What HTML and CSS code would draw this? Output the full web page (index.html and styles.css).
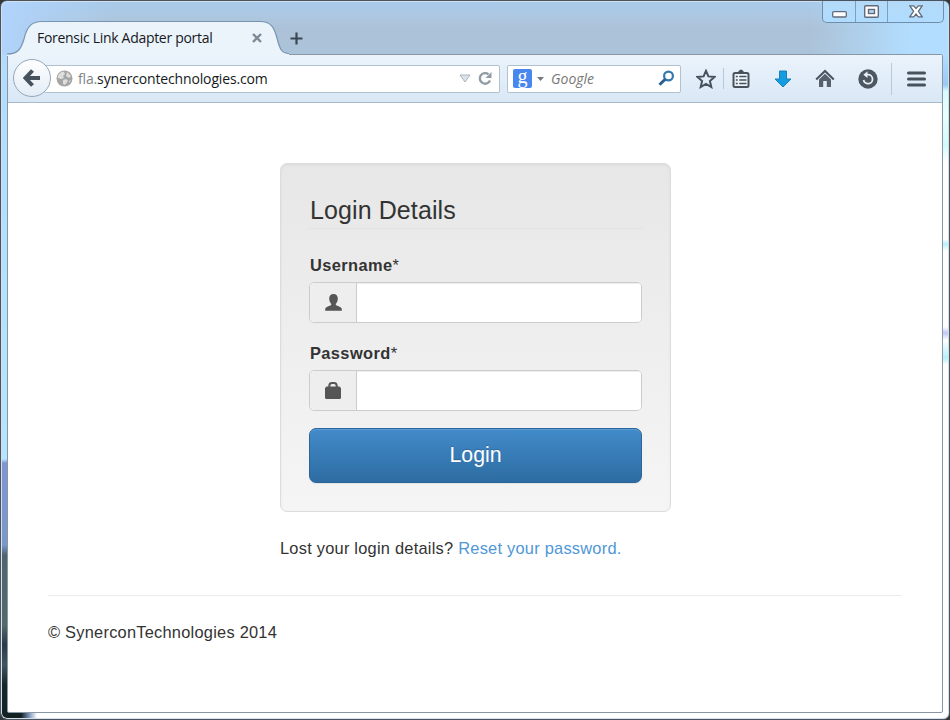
FILE: index.html
```html
<!DOCTYPE html>
<html lang="en">
<head>
<meta charset="utf-8">
<title>Forensic Link Adapter portal</title>
<link rel="stylesheet" href="styles.css">
</head>
<body>
<div class="window">
  <header class="titlebar">
    <div class="tab">
      <svg class="tab-shape" width="282" height="36" viewBox="0 0 282 36"><path d="M0 36V34.500C11 34 14 29 17 19C20 6 25 1.500 35 1.500H253C264 1.500 267 7 270 18C273 30 275 33.500 282 33.500V36Z" fill="#ebf3fb"/><path d="M0 34C11 34 14 29 17 19C20 6 25 1.500 35 1.500H253C264 1.500 267 7 270 18C273 30 275 33.500 282 33.500" fill="none" stroke="#7895b0" stroke-width="1.200"/></svg>
      <span class="tab-title">Forensic Link Adapter portal</span>
      <svg class="tab-close" width="10" height="10" viewBox="0 0 10 10"><path d="M1 1L9 9M9 1L1 9" stroke="#7d8b98" stroke-width="2.400"/></svg>
    </div>
    <svg class="new-tab" width="13" height="13" viewBox="0 0 13 13"><path d="M6.500 .5V12.500M.5 6.500H12.500" stroke="#394752" stroke-width="2.200"/></svg>
    <div class="caption">
      <span class="cap min"><svg width="15" height="7" viewBox="0 0 15 7"><rect x=".7" y=".7" width="13.600" height="5.300" rx="1" fill="#fff" stroke="#626b7a" stroke-width="1.300"/></svg></span>
      <span class="cap max"><svg width="15" height="13" viewBox="0 0 15 13"><rect x=".7" y=".7" width="13.600" height="11.600" rx="1" fill="#fff" stroke="#626b7a" stroke-width="1.400"/><rect x="4.500" y="4.500" width="6" height="4" fill="#b4daf8" stroke="#626b7a" stroke-width="1.400"/></svg></span>
      <span class="cap close"><svg width="14" height="13" viewBox="0 0 14 13"><path d="M.8 .8H4.700L7 3.600L9.300 .8H13.200L9.400 6.300L13.200 11.800H9.300L7 9L4.700 11.800H.8L4.600 6.300Z" fill="#fff" stroke="#626b7a" stroke-width="1.300"/></svg></span>
    </div>
  </header>
  <main class="client">
    <nav class="toolbar">
      <div class="back"><svg width="18" height="18" viewBox="0 0 18 18"><path d="M9.500 1.500L2.500 9L9.500 16.500M3 9H17" fill="none" stroke="#46535e" stroke-width="4"/></svg></div>
      <div class="urlbar">
        <svg class="globe" width="17" height="17" viewBox="0 0 17 17"><circle cx="8.500" cy="8.500" r="8" fill="#a5a5a5"/><path d="M2 6C3 3 6 1 8 2L9 4L7 6L8 8L5 9L2 8ZM11 2L15 6L13 8L10 6ZM7 10L10 9L12 11L9 15L7 14ZM13 11L15 10L13 13Z" fill="#dedede"/></svg>
        <span class="url"><span class="sub">fla.</span>synercontechnologies.com</span>
        <svg class="drop" width="12" height="9" viewBox="0 0 12 9"><path d="M1 1H11L6 8Z" fill="#dce2e8" stroke="#a9b5c0"/></svg>
        <svg class="reload" width="15" height="15" viewBox="0 0 15 15"><path d="M12 9.500A5.300 5.300 0 1 1 10.500 3.300" fill="none" stroke="#8f9ba6" stroke-width="2.400"/><path d="M13.500 1V7H7.500Z" fill="#8f9ba6"/></svg>
      </div>
      <div class="search">
        <span class="engine">g</span>
        <svg width="7" height="4" viewBox="0 0 7 4"><path d="M0 0H7L3.500 4Z" fill="#737a80"/></svg>
        <span class="hint">Google</span>
        <svg class="lens" width="17" height="17" viewBox="0 0 17 17"><circle cx="10.500" cy="6" r="4.400" fill="none" stroke="#3378ae" stroke-width="2.200"/><path d="M7.200 9.200L1.500 14.800" stroke="#285f93" stroke-width="3"/></svg>
      </div>
      <div class="tools">
        <svg width="20" height="20" viewBox="0 0 20 20"><path d="M10 1.800L12.400 7.400L18.500 7.900L13.900 12L15.300 18L10 14.800L4.700 18L6.100 12L1.500 7.900L7.600 7.400Z" fill="none" stroke="#47525d" stroke-width="2"/></svg>
        <i class="rule short"></i>
        <svg width="18" height="20" viewBox="0 0 18 20"><path d="M5 4L8 .8H10L13 4Z" fill="#47525d"/><rect x="1.500" y="4" width="15" height="14" rx="1.500" fill="#eef3f8" stroke="#47525d" stroke-width="2"/><path d="M3.800 7.500H5.800M7.300 7.500H14.500M3.800 11H5.800M7.300 11H14.500M3.800 14.500H5.800M7.300 14.500H14.500" stroke="#47525d" stroke-width="1.500"/></svg>
        <svg width="18" height="18" viewBox="0 0 18 18"><path d="M5.500 1H12.500V9H17L9 17L1 9H5.500Z" fill="#159be0" stroke="#1680b9"/></svg>
        <svg width="20" height="19" viewBox="0 0 20 19"><path d="M1.200 10.500L10 2L18.800 10.500" fill="none" stroke="#47525d" stroke-width="2"/><path d="M4 10.500L10 4.800L16 10.500V18H11.800V12H8.200V18H4Z" fill="#56616b"/></svg>
        <svg width="20" height="20" viewBox="0 0 20 20"><circle cx="10" cy="10" r="9.700" fill="#4c5761"/><path d="M5.600 11A4.500 4.500 0 1 0 10 5.700H8" fill="none" stroke="#e8eef4" stroke-width="1.800"/><path d="M5.300 5.700L9.500 2.300V9Z" fill="#e8eef4"/></svg>
        <i class="rule tall"></i>
        <svg width="19" height="16" viewBox="0 0 19 16"><path d="M1.500 2H17.500M1.500 8H17.500M1.500 14H17.500" stroke="#47525d" stroke-width="3" stroke-linecap="round"/></svg>
      </div>
    </nav>
    <section class="page">
      <form class="card">
        <h1>Login Details</h1>
        <label for="user">Username<span>*</span></label>
        <div class="field">
          <span class="addon"><svg width="17" height="17" viewBox="0 0 17 17"><path d="M8.500 0C11.300 0 12.800 1.800 12.800 4.500C12.800 7 11.800 8.800 10.800 9.800V11C11.800 12 16.500 12.600 16.800 15V16.700H.2V15C.5 12.600 5.200 12 6.200 11V9.800C5.200 8.800 4.200 7 4.200 4.500C4.200 1.800 5.700 0 8.500 0Z" fill="#555"/></svg></span>
          <input id="user" type="text">
        </div>
        <label for="pass">Password<span>*</span></label>
        <div class="field">
          <span class="addon"><svg width="16" height="17" viewBox="0 0 16 17"><path d="M4.300 6V3.500Q4.500 1 7 1H9Q11.500 1 11.700 3.500V6" fill="none" stroke="#555" stroke-width="2"/><path d="M1.500 4.500H14.500L16 6V15.500Q16 17 14.500 17H1.500Q0 17 0 15.500V6Z" fill="#555"/></svg></span>
          <input id="pass" type="password">
        </div>
        <button type="button">Login</button>
      </form>
      <p class="lost">Lost your login details? <a href="#">Reset your password.</a></p>
      <hr>
      <footer>© SynerconTechnologies 2014</footer>
    </section>
  </main>
</div>
</body>
</html>
```
FILE: styles.css
```css
* { box-sizing: border-box; }
body { margin: 0; background: #34383d; font-family: "Liberation Sans", Arial, sans-serif; overflow: hidden; }
svg { display: block; flex: none; }
.window {
  width: 950px; height: 720px; display: grid; grid-template-rows: 53px 1fr;
  padding: 0 6px 6px; border: 1px solid #4b535d; border-radius: 7px;
  box-shadow: inset 0 0 0 1px #d3e0eb;
  background:
    linear-gradient(90deg, #b0d4fc 0, #b0d4fc00 110px) 0 0 / 100% 54px no-repeat,
    linear-gradient(90deg, #b2ddff00 810px, #b2ddff 910px) 0 0 / 100% 54px no-repeat,
    linear-gradient(#a7cbec 0, #adc7e0 16px, #acc1d7 28px, #abc4d9 54px) 0 0 / 100% 54px no-repeat,
    linear-gradient(#b2dcff 0, #b6e5ff 404px, #8194d2 408px, #7899cd 490px, #4d666e 500px, #536a6c 570px, #2b3b49 590px, #40565c 610px, #15262b 630px, #10191e) 0 54px / 7px 100% no-repeat,
    linear-gradient(#b2ddff 0, #9bc9f4 30px, #d9faff 36px, #e8ffff 60px, #d3fafa 90px, #fff 108px, #fff 184px, #b7effb 189px, #fff 196px, #fff 272px, #bcc8f5 278px, #fff 285px, #b5effb 303px, #fff 310px) 100% 54px / 7px 100% no-repeat,
    linear-gradient(90deg, #12201f, #12201f 20px, #7c92b8 28px, #fff 36px) 0 100% / 100% 7px no-repeat;
}
.titlebar { display: flex; align-items: flex-start; }
.tab { position: relative; width: 282px; height: 36px; margin-top: 19px; display: flex; align-items: center; padding: 0 27px 0 30px; z-index: 1; }
.tab-shape { position: absolute; left: 0; top: 0; }
.tab-title, .tab-close { position: relative; }
.tab-title { font: 14px "Open Sans", sans-serif; white-space: nowrap; letter-spacing: -.3px; color: #15191d; flex: 1; top: -1px; }
.new-tab { margin: 31px 0 0 1px; }
.caption { margin: 0 -1px 0 auto; display: flex; height: 22px; width: 122px; border: 1px solid #708ea8; border-top: 0; border-radius: 0 0 5px 5px; background: linear-gradient(#b4daf8, #afdcff); }
.cap { display: flex; align-items: center; justify-content: center; width: 33px; border-right: 1px solid #7e9fb9; }
.cap.max { width: 32px; }
.cap.min { padding-top: 6px; }
.cap.close { flex: 1; border: 0; }
.client { border: 1px solid #8797a5; background: #fff; display: grid; grid-template-rows: 48px 1fr; min-height: 0; border-radius: 2px; }
.toolbar { display: flex; align-items: center; background: linear-gradient(#ebf3fb, #d9e8f6); border-bottom: 1px solid #a7b9ca; padding-left: 5px; }
.back { width: 38px; height: 38px; border: 1px solid #94a8ba; border-radius: 50%; background: linear-gradient(#fff, #e3edf6); display: grid; place-items: center; position: relative; flex: none; margin-top: -1px; }
.urlbar, .search { height: 28px; border: 1px solid #b2c1ce; background: #fff; display: flex; align-items: center; border-radius: 2px; }
.urlbar { width: 456px; margin-left: -7px; padding: 0 6px 0 12px; border-left: 0; }
.url { font: 14px "Open Sans", sans-serif; letter-spacing: -.15px; color: #15191d; margin-left: 5px; white-space: nowrap; flex: 1; }
.sub { color: #7f8488; }
.drop { margin-right: 7px; }
.search { width: 174px; margin-left: 7px; padding: 0 5px; }
.engine { width: 19px; height: 19px; background: #4787ee; border-radius: 2px; color: #fff; font: 20px/14px "Liberation Serif", serif; text-align: center; margin-right: 5px; }
.hint { font: italic 14px "Open Sans", sans-serif; color: #777; margin-left: 7px; flex: 1; }
.tools { display: flex; align-items: center; margin-left: 15px; flex: 1; }
.rule { width: 1px; background: #b8c8d7; }
.rule.short { height: 21px; margin: 0 8px 0 7px; }
.rule.tall { height: 32px; margin: 0 15px 0 13px; }
.tools svg:nth-of-type(3) { margin-left: 24px; }
.tools svg:nth-of-type(4) { margin-left: 23px; }
.tools svg:nth-of-type(5) { margin-left: 23px; }
.page { padding: 60px 40px 0 40px; color: #333; font-size: 16.4px; letter-spacing: .24px; }
.card { width: 391px; height: 349px; margin-left: 232px; border: 1px solid #dcdcdc; border-radius: 7px; background: linear-gradient(#e7e7e7, #f5f5f5); box-shadow: inset 0 1px 3px #0000000d; padding: 28px 28px 0; }
h1 { font-size: 25px; letter-spacing: .1px; line-height: 36px; font-weight: 400; margin: 0 0 26px; height: 37px; border-bottom: 1px solid #e1e1e1; padding-left: 1px; }
label { display: block; font-weight: 700; line-height: 20px; margin-bottom: 7px; padding-left: 1px; letter-spacing: .4px; }
label span { font-weight: 400; }
.field { display: flex; height: 41px; border: 1px solid #ccc; border-radius: 5px; overflow: hidden; background: #fff; margin-bottom: 20px; }
.addon { width: 47px; border-right: 1px solid #ccc; background: #eee; display: grid; place-items: center; }
input { border: 0; padding: 0 14px; flex: 1; min-width: 0; outline: 0; font-size: 16px; background: #fff; box-shadow: inset 0 1px 1px #00000013; }
button { display: block; width: 100%; height: 55px; margin-top: -3px; padding: 0; font: 21.3px "Liberation Sans", Arial, sans-serif; color: #fff; border: 1px solid #2b669a; border-radius: 7px; background: linear-gradient(#428bca, #2d6ca2); box-shadow: inset 0 1px 0 #ffffff26, 0 1px 1px #00000013; text-shadow: 0 -1px 0 #00000033; }
.lost { margin: 26px 0 0 232px; line-height: 20px; white-space: nowrap; }
a { color: #4f97d8; text-decoration: none; }
hr { border: 0; height: 1px; background: #ececec; margin: 37px 0 26px; }
footer { line-height: 20px; }
```
